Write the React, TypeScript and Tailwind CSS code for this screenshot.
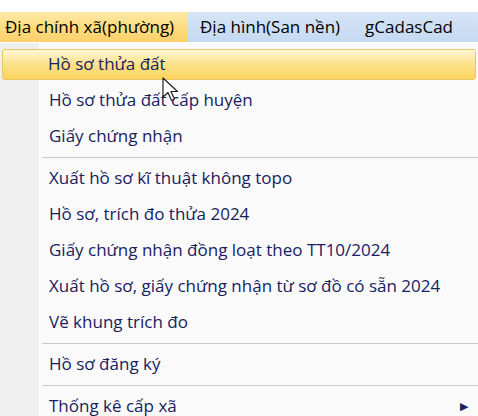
import { ReactNode } from "react";

type Item = { label: string; sep?: boolean; sub?: boolean; active?: boolean };

const items: Item[] = [
  { label: "Hồ sơ thửa đất", active: true },
  { label: "Hồ sơ thửa đất cấp huyện" },
  { label: "Giấy chứng nhận" },
  { label: "", sep: true },
  { label: "Xuất hồ sơ kĩ thuật không topo" },
  { label: "Hồ sơ, trích đo thửa 2024" },
  { label: "Giấy chứng nhận đồng loạt theo TT10/2024" },
  { label: "Xuất hồ sơ, giấy chứng nhận từ sơ đồ có sẵn 2024" },
  { label: "Vẽ khung trích đo" },
  { label: "", sep: true },
  { label: "Hồ sơ đăng ký" },
  { label: "", sep: true },
  { label: "Thống kê cấp xã", sub: true },
];

function Cursor() {
  return (
    <svg
      className="absolute left-[162px] top-[77px]"
      width="22"
      height="26"
      viewBox="0 0 22 26"
    >
      <path
        d="M1 1 L1 20 L6 15.5 L9.5 23.5 L12.5 22.2 L9 14.5 L15.5 14.5 Z"
        fill="#fff"
        stroke="#222"
        strokeWidth="1.2"
        strokeLinejoin="round"
      />
    </svg>
  );
}

function Row({ item }: { item: Item }): ReactNode {
  if (item.sep) {
    return (
      <div className="flex h-[6px] items-center">
        <div className="w-[40px] self-stretch" />
        <div className="ml-[2px] h-px flex-1 bg-[#c9c9c9]" />
      </div>
    );
  }
  return (
    <div className="flex h-[36px] items-center">
      <div
        className={
          item.active
            ? "mx-[2px] flex h-[31px] flex-1 items-center rounded-[3px] border border-[#e9c56a] bg-gradient-to-b from-[#fff6d2] via-[#fde189] to-[#fbd35c] pl-[45px]"
            : "flex h-[31px] flex-1 items-center pl-[49px]"
        }
      >
        <span className="text-[17px] text-[#17215f]">{item.label}</span>
      </div>
      {item.sub && (
        <span className="absolute right-[10px] text-[11px] text-[#17215f]">▶</span>
      )}
    </div>
  );
}

export default function App() {
  return (
    <div
      className="relative h-[416px] w-[478px] overflow-hidden bg-white"
      style={{ fontFamily: '"Open Sans", "Noto Sans", sans-serif' }}
    >
      <div className="h-[12px] bg-white" />
      <div className="flex h-[30px] items-center bg-gradient-to-b from-[#d6e5f7] to-[#c4d9f2] text-[17px] text-black">
        <div className="flex h-full w-[188px] items-center bg-gradient-to-b from-[#fee9a8] via-[#fddc7f] to-[#fcd06a] pl-[5px]">
          Địa chính xã(phường)
        </div>
        <div className="pl-[12px]">Địa hình(San nền)</div>
        <div className="pl-[25px]">gCadasCad</div>
      </div>
      <div className="relative h-[374px] border-t border-white bg-[#fafafa]">
        <div className="absolute left-0 top-0 h-full w-[40px] border-r border-white bg-[#efefef]" />
        <div className="relative pt-[3px]">
          {items.map((it, i) => (
            <Row key={i} item={it} />
          ))}
        </div>
      </div>
      <Cursor />
    </div>
  );
}
